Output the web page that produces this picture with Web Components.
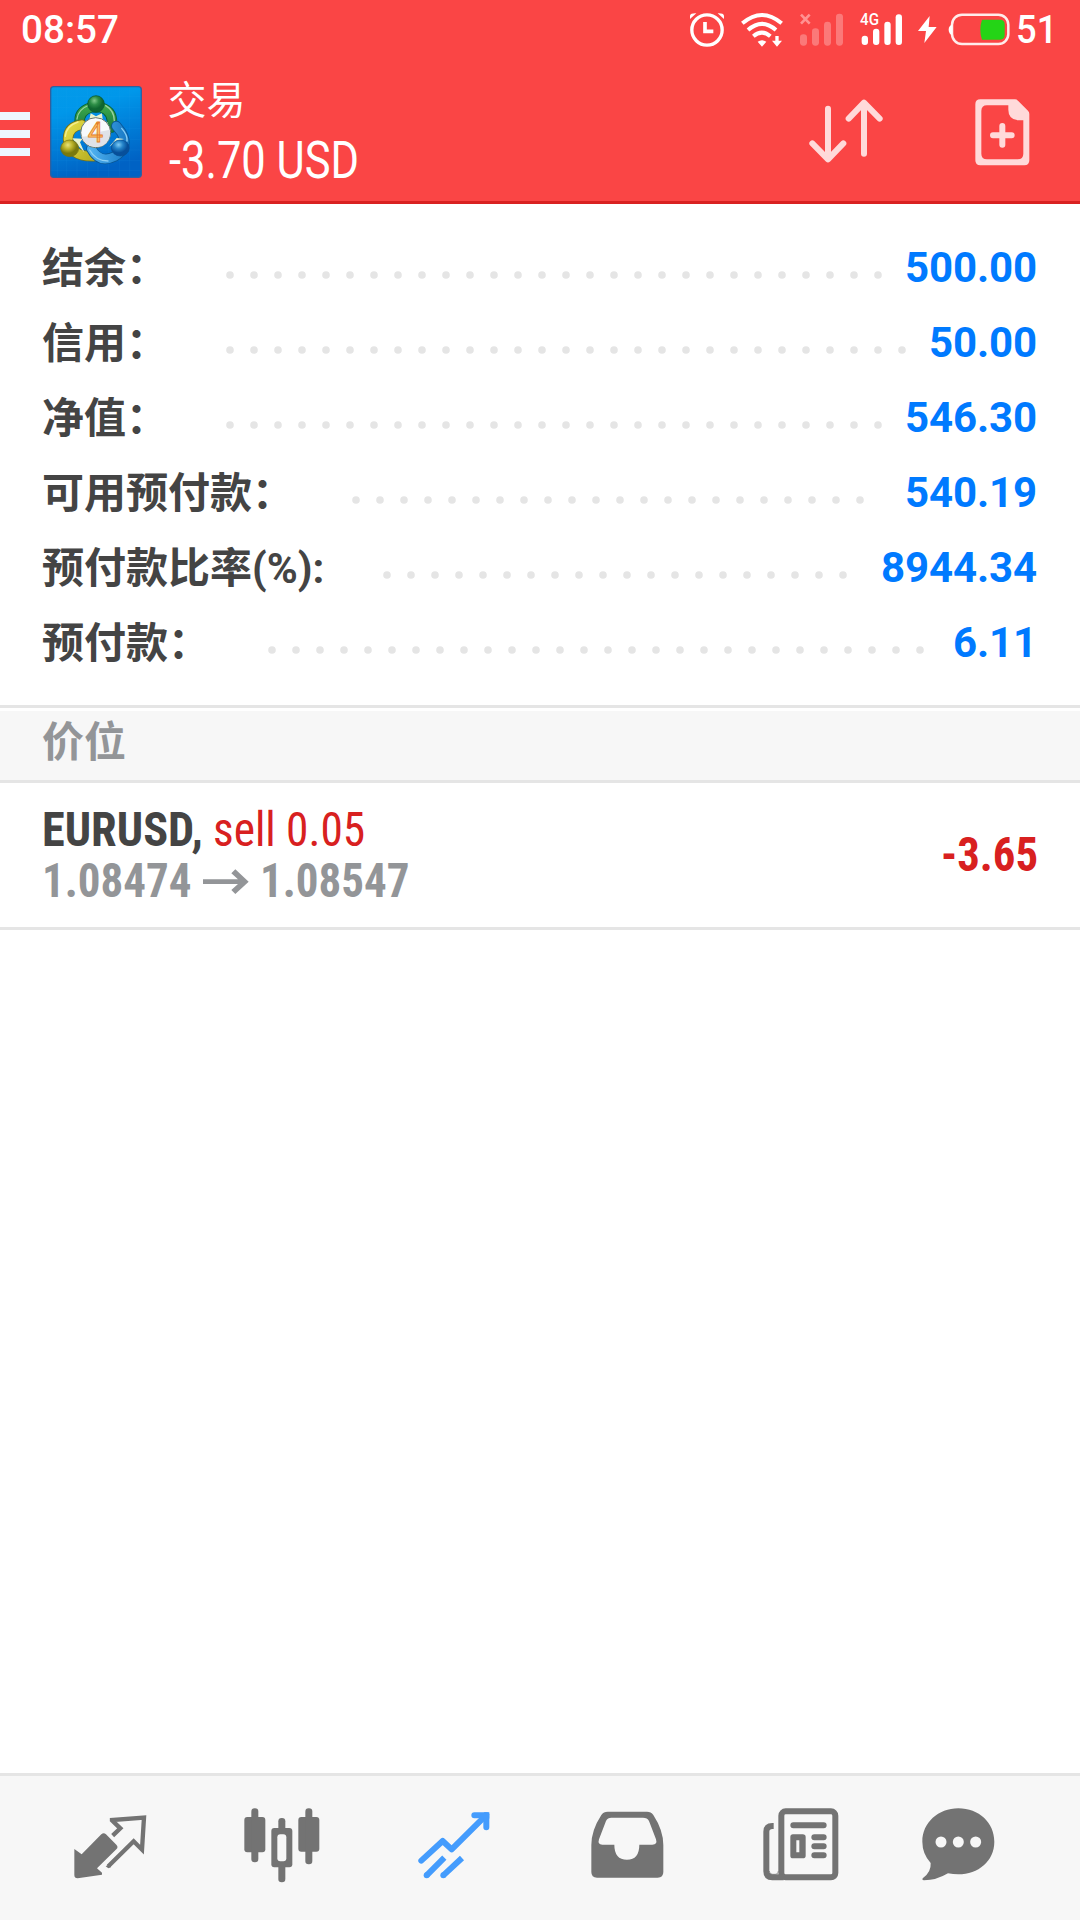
<!DOCTYPE html>
<html lang="zh-CN">
<head>
<meta charset="utf-8">
<title>交易</title>
<style>
html,body{margin:0;padding:0;background:#fff}
body{width:1080px;height:1920px;overflow:hidden;font-family:Roboto,"Noto Sans CJK SC",sans-serif}
</style>
</head>
<body>
<trade-app></trade-app>
<script>
const ICONS = {
  alarm: ['30 36 103 106', `<g fill="none" stroke="#fff"><circle cx="81" cy="90" r="45.500" stroke-width="10"/><path d="M75 66V94H100" stroke-width="11"/></g><path fill="#fff" d="M30 57V47Q32 39 49 40ZM132 57V47Q130 39 113 40Z"/>`],
  wifi: ['183 36 125 106', `<g fill="none" stroke="#fff" stroke-width="12"><path d="M187 70Q246 20 305 70"/><path d="M204 90Q246 53 288 90"/><path d="M220 109Q246 87 271 109"/></g><path fill="#fff" d="M233 125Q246 116 259 125L246 140ZM286 108H296V122H306L291 140L276 122H286Z"/>`],
  nosim: ['360 40 130 98', `<g fill="#fff" opacity=".28"><rect x="360" y="104" width="21" height="34" rx="10"/><rect x="396" y="86" width="21" height="52" rx="10"/><rect x="432" y="66" width="21" height="72" rx="10"/><rect x="468" y="42" width="21" height="96" rx="10"/></g><path d="M363 45L389 72M389 45L363 72" stroke="#ff9292" stroke-width="8"/>`],
  signal: ['542 28 127 110', `<g fill="#fff"><rect x="547" y="108" width="19" height="28" rx="9"/><rect x="581" y="87" width="19" height="49" rx="9"/><rect x="615" y="66" width="19" height="70" rx="9"/><rect x="649" y="44" width="19" height="92" rx="9"/><text x="542" y="77" font-family="Roboto" font-weight="500" font-size="47" textLength="57" lengthAdjust="spacingAndGlyphs">4G</text></g>`],
  bolt: ['716 50 56 82', `<path fill="#fff" d="M751 50L716 95H740L735 131L772 83H748Z"/>`],
  battery: ['806 40 186 98', `<rect x="818" y="45" width="169" height="88" rx="30" fill="none" stroke="#ffeceb" stroke-width="7.500"/><path fill="#fff" d="M819 74V107Q808 102 808 90Q808 79 819 74Z"/><path fill="#24d416" d="M908 60H962Q976 60 976 74V106Q976 120 962 120H908Q903 106 903 90Q903 74 908 60Z"/>`],
  menu: ['0 0 30 44', `<path fill="#eef6ff" d="M0 0H30V8H0ZM0 18H30V26H0ZM0 36H30V44H0Z"/>`],
  sort: ['147 88 223 194', `<g fill="none" stroke="#ffdada" stroke-width="18" stroke-linecap="round" stroke-linejoin="round"><path d="M204 117V268M157 221L204 269L250 221M312 252V100M266 147L312 99L359 147"/></g>`],
  add: ['644 86 164 200', `<path fill="#ffdada" fill-rule="evenodd" d="M660 87H764Q769 87 773 91L803 121Q807 125 807 131V270Q807 285 792 285H660Q645 285 645 270V102Q645 87 660 87ZM680 105Q663 105 663 122V250Q663 267 680 267H772Q789 267 789 250V150H775Q744 148 744 118V105Z"/><path d="M726 167V223M698 195H754" stroke="#ffdada" stroke-width="18" stroke-linecap="round"/>`],
  quotes: ['101 164 218 190', `<path fill="#737373" d="M102 266L124 282L183 222Q190 215 197 222L228 253Q235 260 228 267L170 324L185 337V343L112 354Q102 354 102 344Z"/><path fill="none" stroke="#737373" stroke-width="13" d="M217 226L240 204L215 180V179L311 172L305 268L280 243L204 318"/><path fill="#737373" d="M196 318L211 309V321L204 324Z"/>`],
  candles: ['611 146 227 224', `<g fill="#737373"><rect x="612" y="173" width="63" height="106" rx="9"/><rect x="633" y="147" width="21" height="162" rx="10"/><rect x="774" y="173" width="63" height="104" rx="9"/><rect x="795" y="147" width="21" height="168" rx="10"/><rect x="693" y="206" width="63" height="118" rx="9"/><rect x="714" y="176" width="21" height="193" rx="10"/></g><rect x="711" y="225" width="27" height="81" rx="9" fill="#f7f7f7"/>`],
  trade: ['1133 155 215 200', `<g fill="none" stroke="#449cfd" stroke-width="18"><path stroke-linecap="round" stroke-linejoin="round" d="M1143 301L1207 242L1234 267L1336 166"/><path stroke-linecap="round" d="M1302 165H1338V201"/><path d="M1159 345L1212 292M1209 345L1265 293"/></g><path fill="#449cfd" d="M1330 156H1341Q1347 156 1347 162V175Z"/><g fill="#449cfd"><circle cx="1159" cy="345" r="9"/><circle cx="1209" cy="345" r="9"/></g>`],
  inbox: ['152 154 218 200', `<path fill="#737373" fill-rule="evenodd" d="M202 156H320Q332 156 339 166Q369 212 369 256V337Q369 354 352 354H170Q153 354 153 337V256Q153 212 183 166Q190 156 202 156ZM213 174Q202 174 197 184L176 239Q171 255 186 255H222Q222 300 260 300Q297 300 297 255H336Q352 255 347 239L326 184Q321 174 308 174Z"/>`],
  news: ['668 146 227 218', `<g fill="none" stroke="#737373" stroke-width="18"><rect x="723" y="156" width="162" height="198" rx="13"/><path d="M700 200H696Q678 200 678 217V336Q678 354 696 354H730"/></g><path d="M687 335Q687 345 697 345H705Q714 345 714 335" fill="none" stroke="#737373" stroke-width="2"/><g stroke="#737373" stroke-width="18" stroke-linecap="round"><path d="M759 198H850M822 234H850M822 261H850M822 288H850"/></g><path fill="#737373" fill-rule="evenodd" d="M758 225H787Q796 225 796 233V289Q796 297 787 297H758Q750 297 750 289V233Q750 225 758 225ZM768 243V279H777V243Z"/>`],
  chat: ['1145 146 218 218', `<path fill="#737373" d="M1254 147C1316 147 1362 190 1362 247C1362 305 1314 345 1254 345Q1238 345 1223 342Q1188 363 1151 363Q1143 361 1148 356Q1173 338 1171 311Q1146 283 1146 247C1146 190 1194 147 1254 147Z"/><g fill="#f7f7f7"><circle cx="1202" cy="248" r="16.500"/><circle cx="1254" cy="248" r="16.500"/><circle cx="1306" cy="248" r="16.500"/></g>`],
  arrow: ['612 257 138 76', `<path fill="#939598" d="M697 270L709 258L749 295L709 332L697 320L717 302H612V288H717Z"/>`],
  logo: ['29 33 276 276', `<defs>
    <linearGradient id="bg" x2=".3" y2="1"><stop stop-color="#039be9"/><stop offset=".3" stop-color="#0097ea"/><stop offset="1" stop-color="#0062c4"/></linearGradient>
    <linearGradient id="g" x2="0" y2="1"><stop stop-color="#3aa648"/><stop offset="1" stop-color="#1d7c43"/></linearGradient>
    <linearGradient id="y" x2="1" y2="1"><stop stop-color="#e2da45"/><stop offset="1" stop-color="#b9b022"/></linearGradient>
    <linearGradient id="b" x2="1" y2="0"><stop stop-color="#4fb0ef"/><stop offset="1" stop-color="#1c7dc8"/></linearGradient>
    <radialGradient id="gh" cx=".4" cy=".3"><stop stop-color="#80c98a"/><stop offset=".5" stop-color="#2d8e46"/><stop offset="1" stop-color="#10662f"/></radialGradient>
    <radialGradient id="yh" cx=".4" cy=".3"><stop stop-color="#e8e37c"/><stop offset=".5" stop-color="#bcb32a"/><stop offset="1" stop-color="#79790d"/></radialGradient>
    <radialGradient id="bh" cx=".4" cy=".3"><stop stop-color="#80ccf5"/><stop offset=".5" stop-color="#2382c8"/><stop offset="1" stop-color="#074f9a"/></radialGradient></defs>
    <rect x="31" y="35" width="272" height="272" rx="9" fill="url(#bg)" stroke="#315f9d" stroke-width="4"/>
    <path stroke="#33b0f4" opacity=".25" d="M51 37V305M79 37V305M110 37V305M141 37V305M173 37V305M205 37V305M237 37V305M268 37V305M33 65H301M33 97H301M33 129H301M33 161H301M33 193H301M33 225H301M33 257H301M33 286H301"/>
    <g stroke-linecap="round" fill="none">
    <path d="M119 146Q112 110 152 97H182Q222 109 214 158" stroke="#086135" stroke-width="31"/><path d="M119 146Q112 110 152 97H182Q222 109 214 158" stroke="url(#g)" stroke-width="26"/><path d="M110 132Q113 103 147 90M196 92Q222 107 222 138" stroke="#9bd19c" stroke-width="4"/>
    <path d="M124 149Q83 155 83 192Q88 245 160 244" stroke="#747019" stroke-width="31"/><path d="M124 149Q83 155 83 192Q88 245 160 244" stroke="url(#y)" stroke-width="26"/><path d="M113 141Q77 153 75 184" stroke="#f4ee8c" stroke-width="4"/>
    <path d="M153 221Q178 267 222 245Q270 218 243 172L228 153" stroke="#085694" stroke-width="31"/><path d="M153 221Q178 267 222 245Q270 218 243 172L228 153" stroke="url(#b)" stroke-width="26"/><path d="M148 225Q166 258 203 258M244 160Q262 180 260 198" stroke="#8ccff5" stroke-width="4"/></g>
    <path fill="#e9f3ce" d="M151 115L167 124L185 115L187 134L203 143V152L185 135H149L129 153V145L147 134ZM96 190L127 191L119 202L132 232L112 211ZM207 215L231 198L251 192L229 189Z"/>
    <g stroke-width="2"><circle cx="167" cy="87" r="25" fill="url(#gh)" stroke="#07552d"/><ellipse cx="88" cy="220" rx="27" ry="25" fill="url(#yh)" stroke="#757114"/><ellipse cx="240" cy="219" rx="27" ry="24" fill="url(#bh)" stroke="#084e93"/></g>
    <circle cx="166" cy="173" r="45" fill="#f8fafc" stroke="#63756c" stroke-width="3"/><path d="M123 184Q148 187 165 173L209 164Q211 215 166 216Q132 214 123 184Z" fill="#dfe2e8"/>
    <text x="142" y="201" font-family="Roboto" font-weight="400" font-size="82" textLength="46" lengthAdjust="spacingAndGlyphs" fill="#ffc46b" stroke="#e47e27" stroke-width="2.500">4</text>`]
};
class UiIcon extends HTMLElement {
  connectedCallback() {
    const [box, body] = ICONS[this.getAttribute('name')];
    const [, , w, h] = box.split(' ').map(Number);
    const k = this.getAttribute('name') === 'menu' ? 1 : 3;
    this.attachShadow({mode: 'open'}).innerHTML = `<style>:host{display:block;flex:none;width:${w / k}px;height:${h / k}px}svg{display:block;width:100%;height:100%;overflow:visible}</style><svg viewBox="${box}">${body}</svg>`;
  }
}
customElements.define('ui-icon', UiIcon);

/* One-line text whose glyphs are set to a given advance width. */
class FitText extends HTMLElement {
  connectedCallback() {
    const w = +this.getAttribute('width');
    this.attachShadow({mode: 'open'}).innerHTML = `<style>:host{display:block;flex:none;width:${w}px;white-space:pre;font-stretch:75%}span{display:inline-block;transform-origin:0 50%}</style><span><slot></slot></span>`;
    const s = this.shadowRoot.querySelector('span');
    s.style.transform = `scaleX(${w / s.offsetWidth})`;
  }
}
customElements.define('fit-text', FitText);

function define(name, html) {
  const t = document.createElement('template');
  t.innerHTML = html;
  customElements.define(name, class extends HTMLElement {
    constructor() { super(); this.attachShadow({mode: 'open'}).append(t.content.cloneNode(true)); }
  });
}
define('status-bar', `<style>
:host{display:flex;height:60px;box-sizing:border-box;padding:0 23px 0 20.500px;color:#fff;font:500 39px/61px Roboto,sans-serif;align-items:flex-start}
.sp{flex:1}</style>
<fit-text width="98" style="font-stretch:100%">08:57</fit-text><span class="sp"></span>
<ui-icon name="alarm" style="margin:12px 17px 0 0"></ui-icon><ui-icon name="wifi" style="margin:12px 17px 0 0"></ui-icon><ui-icon name="nosim" style="margin:13px 17px 0 0"></ui-icon><ui-icon name="signal" style="margin:9px 16px 0 0"></ui-icon><ui-icon name="bolt" style="margin:16px 11px 0 0"></ui-icon><ui-icon name="battery" style="margin:13px 6px 0 0"></ui-icon><fit-text width="41" style="font-stretch:100%">51</fit-text>`);
define('app-header', `<style>
:host{display:flex;height:144px;box-sizing:border-box;border-bottom:3px solid #d92222;color:#fff;align-items:flex-start}
.t{flex:1;display:flex;flex-direction:column;padding:8px 0 0 26.500px}
.n{font:380 39px/58px "Noto Sans CJK SC",sans-serif;margin-left:-1px}
.p{font:450 51px/60px Roboto,sans-serif;margin-top:5px}</style>
<ui-icon name="menu" style="margin-top:52px"></ui-icon><ui-icon name="logo" style="margin:26px 0 0 20px"></ui-icon>
<div class="t"><div class="n">交易</div><fit-text class="p" width="190">-3.70 USD</fit-text></div>
<ui-icon name="sort" style="margin:39px 92px 0 0"></ui-icon><ui-icon name="add" style="margin:39px 50px 0 0"></ui-icon>`);
class SummaryRow extends HTMLElement {
  connectedCallback() {
    const n = +this.getAttribute('dots'), x = +this.getAttribute('start');
    let c = '';
    for (let i = 0; i < n; i++) c += `<circle cx="${4 + i * 24}" cy="4" r="3.800"/>`;
    this.attachShadow({mode: 'open'}).innerHTML = `<style>
:host{display:flex;height:75px;align-items:center;padding:0 43px 0 42px;font:700 42px/75px Roboto,"Noto Sans CJK SC",sans-serif}
.l{width:${x - 46}px;color:#444;white-space:nowrap;margin-top:1px}svg{display:block;flex:none;margin-top:14px;fill:#e5e5e5}.v{flex:1;text-align:right;color:#007aff;letter-spacing:-.1px}</style>
<span class="l"><slot></slot></span><svg width="${n * 24 - 16}" height="8">${c}</svg><span class="v"><slot name="value"></slot></span>`;
  }
}
customElements.define('summary-row', SummaryRow);
define('section-title', `<style>:host{display:block;height:72px;border-top:3px solid #e5e5e5;border-bottom:3px solid #e5e5e5;margin-top:0}
div{margin-top:3px;height:69px;padding:0 42px;background:#f7f7f7;color:#939598;font:700 42px/55px "Noto Sans CJK SC",sans-serif}</style><div><slot></slot></div>`);
define('position-row', `<style>:host{display:flex;height:144px;border-bottom:3px solid #e5e5e5;padding:0 42px;font:700 48px/51px Roboto,sans-serif;align-items:center;justify-content:space-between}
.a,.b{display:flex}.b{color:#939598}.s{color:#444}.k{font-weight:450;color:#d82020;margin-left:9.500px}.v{color:#d82020;margin-top:-2px}
ui-icon{margin:13.500px 11px 0 11px}</style>
<div><div class="a"><fit-text class="s" width="161"><slot name="symbol"></slot></fit-text><fit-text class="k" width="152"><slot name="kind"></slot></fit-text></div>
<div class="b"><fit-text width="150"><slot name="from"></slot></fit-text><ui-icon name="arrow"></ui-icon><fit-text width="150"><slot name="to"></slot></fit-text></div></div>
<fit-text class="v" width="97"><slot name="value"></slot></fit-text>`);
define('tab-bar', `<style>:host{display:flex;height:144px;border-top:3px solid #e5e5e5;background:#f7f7f7;padding-left:73.700px;align-items:flex-start}</style>
<ui-icon name="quotes" style="margin:38.700px 97.300px 0 0"></ui-icon><ui-icon name="candles" style="margin:32px 98.300px 0 0"></ui-icon><ui-icon name="trade" style="margin:35.700px 101.300px 0 0"></ui-icon><ui-icon name="inbox" style="margin:35.300px 99.300px 0 0"></ui-icon><ui-icon name="news" style="margin:32.300px 83.600px 0 0"></ui-icon><ui-icon name="chat" style="margin-top:32.300px"></ui-icon>`);
define('trade-app', `<style>:host{display:flex;flex-direction:column;width:1080px;height:1920px;background:#fff}
.top{background:#fa4545}.sum{height:501px;box-sizing:border-box;padding-top:26px}.fill{flex:1}</style>
<div class="top"><status-bar></status-bar><app-header></app-header></div>
<div class="sum">
<summary-row start="230" dots="28">结余：<span slot="value">500.00</span></summary-row>
<summary-row start="230" dots="29">信用：<span slot="value">50.00</span></summary-row>
<summary-row start="230" dots="28">净值：<span slot="value">546.30</span></summary-row>
<summary-row start="356" dots="22">可用预付款：<span slot="value">540.19</span></summary-row>
<summary-row start="387" dots="20">预付款比率(%):<span slot="value">8944.34</span></summary-row>
<summary-row start="272" dots="28">预付款：<span slot="value">6.11</span></summary-row>
</div>
<section-title>价位</section-title>
<position-row><span slot="symbol">EURUSD,</span><span slot="kind">sell 0.05</span><span slot="from">1.08474</span><span slot="to">1.08547</span><span slot="value">-3.65</span></position-row>
<div class="fill"></div><tab-bar></tab-bar>`);
</script>
</body>
</html>
